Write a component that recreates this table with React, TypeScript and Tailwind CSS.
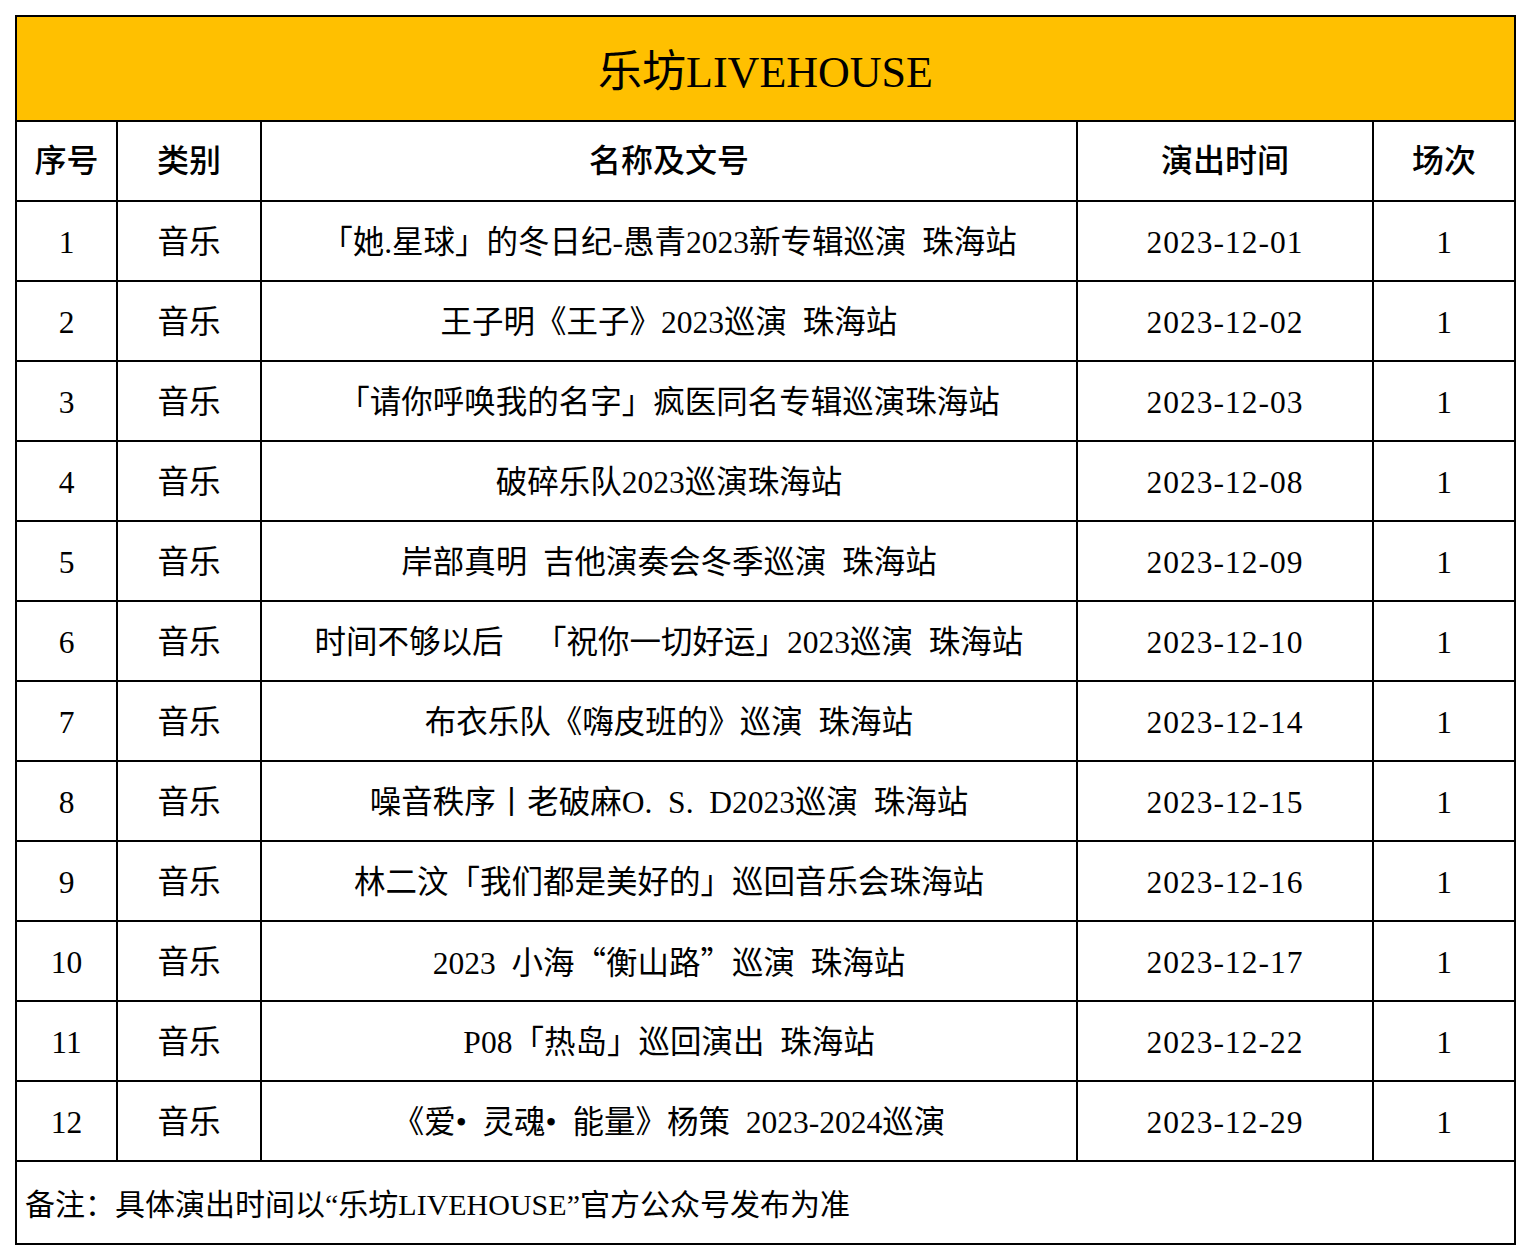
import React from 'react'

interface Show {
  no: number
  type: string
  name: React.ReactNode
  date: string
  count: number
}

// full-width curly quotes, as in the source sheet
const Q = ({ children }: { children: string }) => (
  <span className="font-['Noto_Sans_CJK_SC',serif] [font-feature-settings:'fwid']">{children}</span>
)

const shows: Show[] = [
  { no: 1, type: '音乐', name: '「她.星球」的冬日纪-愚青2023新专辑巡演 珠海站', date: '2023-12-01', count: 1 },
  { no: 2, type: '音乐', name: '王子明《王子》2023巡演 珠海站', date: '2023-12-02', count: 1 },
  { no: 3, type: '音乐', name: '「请你呼唤我的名字」疯医同名专辑巡演珠海站', date: '2023-12-03', count: 1 },
  { no: 4, type: '音乐', name: '破碎乐队2023巡演珠海站', date: '2023-12-08', count: 1 },
  { no: 5, type: '音乐', name: '岸部真明 吉他演奏会冬季巡演 珠海站', date: '2023-12-09', count: 1 },
  { no: 6, type: '音乐', name: '时间不够以后  「祝你一切好运」2023巡演 珠海站', date: '2023-12-10', count: 1 },
  { no: 7, type: '音乐', name: '布衣乐队《嗨皮班的》巡演 珠海站', date: '2023-12-14', count: 1 },
  { no: 8, type: '音乐', name: '噪音秩序丨老破麻O. S. D2023巡演 珠海站', date: '2023-12-15', count: 1 },
  { no: 9, type: '音乐', name: '林二汶「我们都是美好的」巡回音乐会珠海站', date: '2023-12-16', count: 1 },
  {
    no: 10,
    type: '音乐',
    name: (
      <>
        2023 小海<Q>“</Q>衡山路<Q>”</Q>巡演 珠海站
      </>
    ),
    date: '2023-12-17',
    count: 1,
  },
  { no: 11, type: '音乐', name: 'P08「热岛」巡回演出 珠海站', date: '2023-12-22', count: 1 },
  { no: 12, type: '音乐', name: '《爱• 灵魂• 能量》杨策 2023-2024巡演', date: '2023-12-29', count: 1 },
]

const cell = 'border-2 border-black text-center align-middle whitespace-pre'

export default function App() {
  return (
    <div className="min-h-screen bg-white pt-[15px] pl-[15px] font-['Liberation_Serif','Noto_Sans_CJK_SC',serif] text-black">
      <table className="w-[1499px] table-fixed border-collapse">
        <colgroup>
          <col className="w-[101px]" />
          <col className="w-[144px]" />
          <col className="w-[816px]" />
          <col className="w-[296px]" />
          <col className="w-[142px]" />
        </colgroup>
        <thead>
          <tr className="h-[105px]">
            <th colSpan={5} className={`${cell} bg-[#FFC000] pt-[8px] text-[44px] font-normal`}>
              乐坊LIVEHOUSE
            </th>
          </tr>
          <tr className="h-[80px] text-[32px] font-medium">
            <th className={`${cell} font-medium`}>序号</th>
            <th className={`${cell} font-medium`}>类别</th>
            <th className={`${cell} font-medium`}>名称及文号</th>
            <th className={`${cell} font-medium`}>演出时间</th>
            <th className={`${cell} font-medium`}>场次</th>
          </tr>
        </thead>
        <tbody className="text-[31.5px] [word-spacing:0.25em]">
          {shows.map(show => (
            <tr key={show.no} className="h-[80px]">
              <td className={`${cell} pt-[3px]`}>{show.no}</td>
              <td className={`${cell} pt-[3px]`}>{show.type}</td>
              <td className={`${cell} pt-[3px]`}>{show.name}</td>
              <td className={`${cell} pt-[3px] tracking-[1px]`}>{show.date}</td>
              <td className={`${cell} pt-[3px]`}>{show.count}</td>
            </tr>
          ))}
          <tr className="h-[83px]">
            <td colSpan={5} className="border-2 border-black pl-[8px] pt-[3px] text-left align-middle text-[30px]">
              备注：具体演出时间以“乐坊LIVEHOUSE”官方公众号发布为准
            </td>
          </tr>
        </tbody>
      </table>
    </div>
  )
}
